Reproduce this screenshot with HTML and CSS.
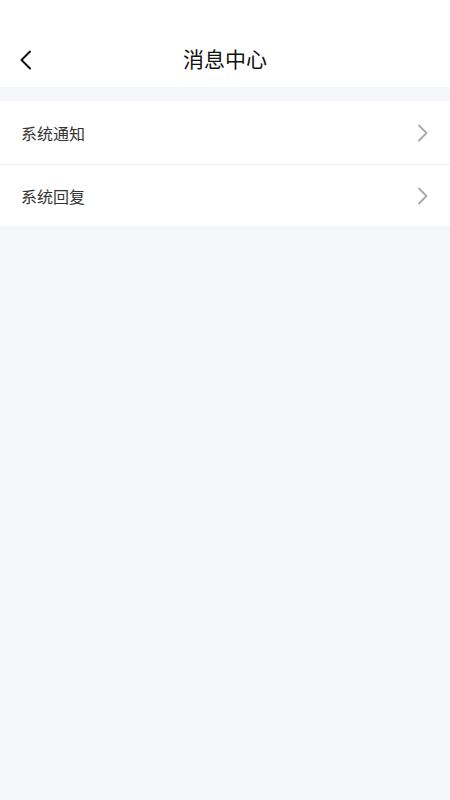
FILE: index.html
```html
<!DOCTYPE html>
<html lang="zh">
<head>
<meta charset="utf-8">
<link rel="stylesheet" href="styles.css">
</head>
<body>
<div class="page">
  <header class="nav">
    <span class="back">
      <svg width="14" height="20" viewBox="0 0 14 20"><path d="M11 1.5 L2.5 10 L11 18.5" fill="none" stroke="#111" stroke-width="2" stroke-linecap="round" stroke-linejoin="round"/></svg>
    </span>
    <h1 class="title">消息中心</h1>
  </header>
  <ul class="list">
    <li class="item"><span class="label">系统通知</span>
      <svg class="arrow" width="12" height="18" viewBox="0 0 12 18"><path d="M2 1.5 L9.5 9 L2 16.5" fill="none" stroke="#a8a8a8" stroke-width="1.8" stroke-linecap="round" stroke-linejoin="round"/></svg>
    </li>
    <li class="item"><span class="label">系统回复</span>
      <svg class="arrow" width="12" height="18" viewBox="0 0 12 18"><path d="M2 1.5 L9.5 9 L2 16.5" fill="none" stroke="#a8a8a8" stroke-width="1.8" stroke-linecap="round" stroke-linejoin="round"/></svg>
    </li>
  </ul>
</div>
</body>
</html>
```
FILE: styles.css
```css
html, body {
  margin: 0;
  padding: 0;
  background: #f5f6fa;
  font-family: "Noto Sans CJK SC", "Noto Sans", sans-serif;
}
.page {
  width: 450px;
  min-height: 800px;
  background: #f5f6fa;
}
.nav {
  height: 87px;
  background: #fff;
  position: relative;
  display: flex;
  align-items: flex-end;
  justify-content: center;
  box-sizing: border-box;
  padding-bottom: 15px;
}
.back {
  position: absolute;
  left: 19px;
  top: 50px;
  width: 14px;
  height: 20px;
  display: flex;
}
.title {
  margin: 0;
  font-size: 21px;
  font-weight: 400;
  color: #111;
  line-height: 28px;
}
.list {
  list-style: none;
  margin: 14px 0 0;
  padding: 0;
  background: #fff;
}
.item {
  height: 62px;
  display: flex;
  align-items: center;
  justify-content: space-between;
  padding: 0 21px 0 21px;
  box-sizing: border-box;
}
.item + .item {
  border-top: 1px solid #f0f0f3;
}
.item:first-child {
  height: 63px;
}
.label {
  font-size: 16px;
  color: #333;
}
.arrow {
  display: block;
}
```
